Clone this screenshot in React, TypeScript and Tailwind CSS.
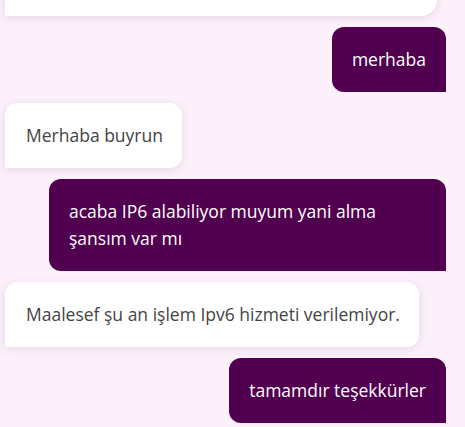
const messages = [
  { from: "me", text: "merhaba" },
  { from: "bot", text: "Merhaba buyrun" },
  { from: "me", text: "acaba IP6 alabiliyor muyum yani alma şansım var mı" },
  { from: "bot", text: "Maalesef şu an işlem Ipv6 hizmeti verilemiyor." },
  { from: "me", text: "tamamdır teşekkürler" },
];

export default function App() {
  return (
    <div className="h-[427px] w-[465px] overflow-hidden bg-[#fcf0fb] font-['Open_Sans',sans-serif]">
      <div className="flex flex-col gap-[11px] pl-[5px] pr-[19px]">
        <div className="-mt-[49px] h-[65px] w-[432px] rounded-[16px] rounded-bl-none bg-white shadow-[0_2px_8px_rgba(80,30,80,0.12)]" />
        {messages.map((m, i) =>
          m.from === "me" ? (
            <div key={i} className="flex justify-end">
              <div className="max-w-[397px] rounded-[12px] rounded-br-none bg-[#510050] px-[20px] py-[19px] text-[17.5px] leading-[27px] text-white">
                {m.text}
              </div>
            </div>
          ) : (
            <div key={i} className="flex justify-start">
              <div className="max-w-[432px] rounded-[12px] rounded-bl-none bg-white py-[19px] pl-[21px] pr-[19px] text-[17.5px] leading-[27px] text-[#444] shadow-[0_2px_8px_rgba(80,30,80,0.12)]">
                {m.text}
              </div>
            </div>
          )
        )}
      </div>
    </div>
  );
}
